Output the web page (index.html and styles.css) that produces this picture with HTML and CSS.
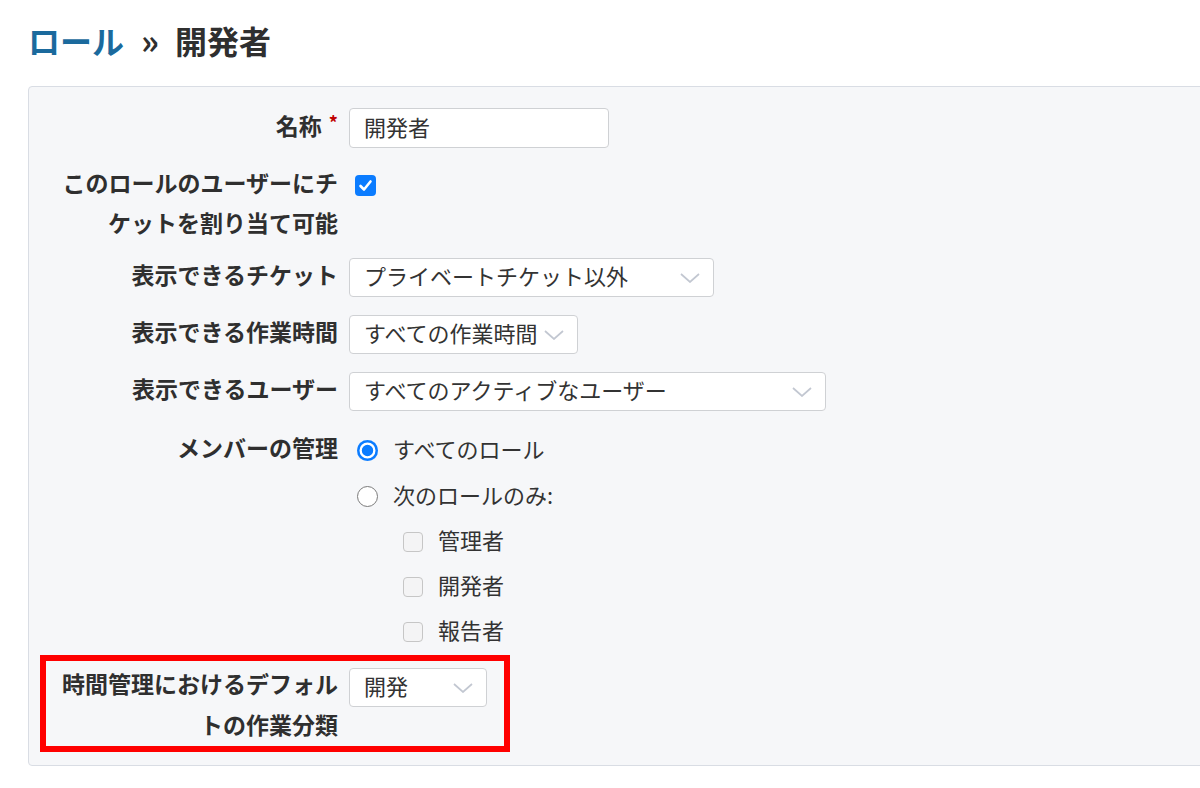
FILE: index.html
```html
<!DOCTYPE html>
<html lang="ja">
<head>
<meta charset="utf-8">
<title>ロール » 開発者</title>
<link rel="stylesheet" href="styles.css">
</head>
<body>
<div class="page">
  <h2 class="title"><a class="crumb" href="#">ロール</a><span class="sep">»</span>開発者</h2>
  <div class="box">
    <div class="row row-a">
      <label class="lbl">名称<span class="required">*</span></label>
      <div class="val"><div class="input"><span class="txt">開発者</span></div></div>
    </div>
    <div class="row row-b">
      <label class="lbl lbl-wrap">このロールのユーザーにチケットを割り当て可能</label>
      <div class="val val-check">
        <span class="cb cb-on"><svg width="21" height="21" viewBox="0 0 21 21"><polyline points="5.5,11 9,14.5 15.5,6.5" fill="none" stroke="#fff" stroke-width="2.6" stroke-linecap="round" stroke-linejoin="round"/></svg></span>
      </div>
    </div>
    <div class="row">
      <label class="lbl">表示できるチケット</label>
      <div class="val"><div class="select sel-ticket"><span class="txt">プライベートチケット以外</span><svg class="chev" width="20" height="10" viewBox="0 0 20 10"><polyline points="1,1 10,9 19,1" fill="none" stroke="#c2c7d1" stroke-width="1.7"/></svg></div></div>
    </div>
    <div class="row">
      <label class="lbl">表示できる作業時間</label>
      <div class="val"><div class="select sel-time"><span class="txt">すべての作業時間</span><svg class="chev" width="20" height="10" viewBox="0 0 20 10"><polyline points="1,1 10,9 19,1" fill="none" stroke="#c2c7d1" stroke-width="1.7"/></svg></div></div>
    </div>
    <div class="row">
      <label class="lbl">表示できるユーザー</label>
      <div class="val"><div class="select sel-user"><span class="txt">すべてのアクティブなユーザー</span><svg class="chev" width="20" height="10" viewBox="0 0 20 10"><polyline points="1,1 10,9 19,1" fill="none" stroke="#c2c7d1" stroke-width="1.7"/></svg></div></div>
    </div>
    <div class="row row-f">
      <label class="lbl lbl-members">メンバーの管理</label>
      <div class="val">
        <div class="opt"><span class="radio radio-on"></span><span class="txt">すべてのロール</span></div>
        <div class="opt"><span class="radio"></span><span class="txt">次のロールのみ:</span></div>
        <div class="sub"><span class="cb cb-off"></span><span class="txt">管理者</span></div>
        <div class="sub"><span class="cb cb-off"></span><span class="txt">開発者</span></div>
        <div class="sub"><span class="cb cb-off"></span><span class="txt">報告者</span></div>
      </div>
    </div>
    <div class="row row-g">
      <label class="lbl lbl-wrap2">時間管理におけるデフォルトの作業分類</label>
      <div class="val"><div class="select sel-act"><span class="txt">開発</span><svg class="chev" width="20" height="10" viewBox="0 0 20 10"><polyline points="1,1 10,9 19,1" fill="none" stroke="#c2c7d1" stroke-width="1.7"/></svg></div></div>
      <div class="highlight"></div>
    </div>
  </div>
</div>
</body>
</html>
```
FILE: styles.css
```css
html, body {
  margin: 0;
  padding: 0;
  background: #ffffff;
  overflow: hidden;
}
body {
  font-family: "Noto Sans CJK JP", "Noto Sans", "Liberation Sans", sans-serif;
  color: #333333;
}
.page {
  padding: 20px 0 0 28px;
}
.title {
  margin: 0 0 26px 0;
  font-size: 32px;
  line-height: 40px;
  font-weight: 700;
  color: #2f2f2f;
  white-space: nowrap;
}
.crumb {
  color: #1b6a9d;
  text-decoration: none;
}
.sep {
  display: inline-block;
  margin: 0 16px 0 17px;
  font-size: 34px;
}
.box {
  width: 1200px;
  box-sizing: border-box;
  background: #f6f7f9;
  border: 1px solid #d9dde4;
  border-radius: 4px;
  padding: 12px 0 17px 0;
}
.row {
  display: grid;
  grid-template-columns: 290px 1fr;
  column-gap: 11px;
  padding: 9px 0 9px 19px;
  align-items: start;
  position: relative;
}
.lbl {
  font-size: 23px;
  font-weight: 700;
  line-height: 39px;
  text-align: right;
  color: #2f2f2f;
  margin: -3px 0 3px 0;
}
.required {
  color: #c00000;
  font-size: 18px;
  line-height: 0;
  vertical-align: 5px;
  margin-left: 7px;
}
.val {
  font-size: 22px;
  color: #333333;
}
.txt {
  display: inline-block;
  line-height: 28px;
  padding-bottom: 5px;
}
.input {
  display: flex;
  align-items: center;
  width: 260px;
  height: 40px;
  box-sizing: border-box;
  background: #ffffff;
  border: 1px solid #cfd1d4;
  border-radius: 4px;
  padding-left: 14px;
}
.row-a .lbl {
  line-height: 40px;
}
.row-b {
  padding: 8px 0 4px 19px;
}
.lbl-wrap {
  line-height: 40px;
}
.lbl-wrap2 {
  line-height: 41px;
}
.val-check {
  padding: 10px 0 0 6px;
}
.cb {
  display: block;
  flex: none;
  box-sizing: border-box;
  border-radius: 4px;
}
.cb-on {
  width: 21px;
  height: 21px;
  background: #0b7cff;
}
.cb-on svg {
  display: block;
}
.cb-off {
  width: 20px;
  height: 20px;
  border: 1.5px solid #c6c6c6;
  background: #f4f4f5;
  margin-right: 15px;
}
.select {
  display: flex;
  align-items: center;
  justify-content: space-between;
  height: 39px;
  box-sizing: border-box;
  background: #ffffff;
  border: 1px solid #cfd1d4;
  border-radius: 4px;
  padding: 0 13px 0 14px;
  white-space: nowrap;
}
.chev {
  display: block;
  flex: none;
}
.sel-ticket { width: 365px; }
.sel-time { width: 229px; }
.sel-user { width: 477px; }
.sel-act { width: 138px; }
.row-f {
  padding: 7px 0 4px 19px;
}
.lbl-members {
  line-height: 46px;
}
.opt {
  display: flex;
  align-items: center;
  height: 46px;
  padding-left: 8px;
}
.sub {
  display: flex;
  align-items: center;
  height: 45px;
  padding-left: 54px;
}
.radio {
  display: block;
  flex: none;
  width: 21px;
  height: 21px;
  box-sizing: border-box;
  border-radius: 50%;
  border: 1.6px solid #7b7b7b;
  background: #ffffff;
  margin-right: 15px;
}
.radio-on {
  border: none;
  background: #0b7cff;
  box-shadow: inset 0 0 0 2.5px #0b7cff, inset 0 0 0 4.8px #ffffff;
}
.row-g {
  padding: 8px 0 0 19px;
}
.row-g .val {
  padding-top: 2px;
}
.highlight {
  position: absolute;
  left: 11px;
  top: -3px;
  width: 470px;
  height: 97px;
  box-sizing: border-box;
  border: 6px solid #ff0000;
  pointer-events: none;
}
```
